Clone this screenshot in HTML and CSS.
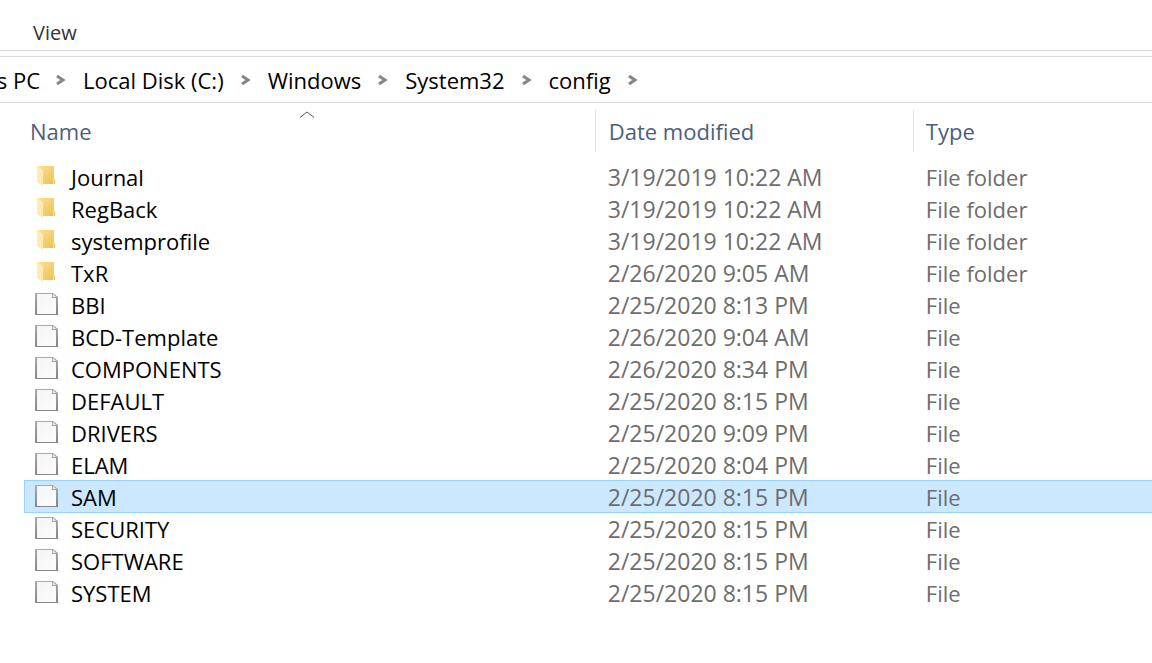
FILE: index.html
```html
<!DOCTYPE html>
<html lang="en">
<head>
  <meta charset="UTF-8">
  <meta name="viewport" content="width=device-width, initial-scale=1.0">
  <title>config</title>
  <link rel="stylesheet" href="styles.css">
</head>

<body>
  <!-- Icons shared by the file rows -->
  <svg class="sprite" aria-hidden="true">
    <defs>
      <linearGradient id="folder-back" x1="0" y1="0" x2="1" y2="1">
        <stop offset="0" stop-color="#ffe08a"/>
        <stop offset="1" stop-color="#eac05c"/>
      </linearGradient>
      <linearGradient id="paper" x1="0" y1="0" x2="1" y2="1">
        <stop offset="0" stop-color="#f3f5f7"/>
        <stop offset="1" stop-color="#fcfcfc"/>
      </linearGradient>
      <linearGradient id="paper-edge" x1="0" y1="0" x2="0" y2="1">
        <stop offset="0" stop-color="#aaaaaa"/>
        <stop offset="1" stop-color="#858585"/>
      </linearGradient>
    </defs>
    <symbol id="folder" viewBox="0 0 24 24">
      <path d="M3 2h16v13l1 1v4H7L3 17z" fill="url(#folder-back)"/>
      <path d="M2 2l5 3q1 1 1 2v15l-5-3q-1-1-1-2z" fill="#ffebb0"/>
      <path d="M18 15h1v5h-1z" fill="#ffdc7c"/>
    </symbol>
    <symbol id="file" viewBox="0 0 24 24">
      <path d="M1 1h17l5 4v18H1z" fill="url(#paper)"/>
      <path d="M0 1h18l5 4v18H0zM2 2v20h19V6h-4V2z" fill="url(#paper-edge)" fill-rule="evenodd"/>
      <path d="M18 2v3h3z" fill="#eeeeee"/>
    </symbol>
    <symbol id="arrow" viewBox="0 0 12 10">
      <path d="M2 1l6 4-6 4" fill="none" stroke="#858585" stroke-width="3"/>
    </symbol>
  </svg>

  <header class="ribbon">
    <button type="button" class="tab">View</button>
  </header>

  <nav class="address" aria-label="Address">
    <a href="#">s PC</a>
    <svg class="arrow"><use href="#arrow"/></svg>
    <a href="#">Local Disk (C:)</a>
    <svg class="arrow"><use href="#arrow"/></svg>
    <a href="#">Windows</a>
    <svg class="arrow"><use href="#arrow"/></svg>
    <a href="#">System32</a>
    <svg class="arrow"><use href="#arrow"/></svg>
    <a href="#">config</a>
    <svg class="arrow"><use href="#arrow"/></svg>
  </nav>

  <main>
    <table class="files">
      <thead>
        <tr>
          <th class="col-name" aria-sort="ascending">
            <button type="button">Name</button>
            <svg class="sort" viewBox="0 0 14 7"><path d="M0 6.500L7 1l7 5.500" fill="none" stroke="#555555"/></svg>
          </th>
          <th class="col-date"><button type="button">Date modified</button></th>
          <th class="col-type"><button type="button">Type</button></th>
        </tr>
      </thead>
      <tbody>
        <tr><td><div class="name"><svg class="icon"><use href="#folder"/></svg>Journal</div></td><td class="date">3/19/2019 10:22 AM</td><td>File folder</td></tr>
        <tr><td><div class="name"><svg class="icon"><use href="#folder"/></svg>RegBack</div></td><td class="date">3/19/2019 10:22 AM</td><td>File folder</td></tr>
        <tr><td><div class="name"><svg class="icon"><use href="#folder"/></svg>systemprofile</div></td><td class="date">3/19/2019 10:22 AM</td><td>File folder</td></tr>
        <tr><td><div class="name"><svg class="icon"><use href="#folder"/></svg>TxR</div></td><td class="date">2/26/2020 9:05 AM</td><td>File folder</td></tr>
        <tr><td><div class="name"><svg class="icon"><use href="#file"/></svg>BBI</div></td><td class="date">2/25/2020 8:13 PM</td><td>File</td></tr>
        <tr><td><div class="name"><svg class="icon"><use href="#file"/></svg>BCD-Template</div></td><td class="date">2/26/2020 9:04 AM</td><td>File</td></tr>
        <tr><td><div class="name"><svg class="icon"><use href="#file"/></svg>COMPONENTS</div></td><td class="date">2/26/2020 8:34 PM</td><td>File</td></tr>
        <tr><td><div class="name"><svg class="icon"><use href="#file"/></svg>DEFAULT</div></td><td class="date">2/25/2020 8:15 PM</td><td>File</td></tr>
        <tr><td><div class="name"><svg class="icon"><use href="#file"/></svg>DRIVERS</div></td><td class="date">2/25/2020 9:09 PM</td><td>File</td></tr>
        <tr><td><div class="name"><svg class="icon"><use href="#file"/></svg>ELAM</div></td><td class="date">2/25/2020 8:04 PM</td><td>File</td></tr>
        <tr class="selected"><td><div class="name"><svg class="icon"><use href="#file"/></svg>SAM</div></td><td class="date">2/25/2020 8:15 PM</td><td>File</td></tr>
        <tr><td><div class="name"><svg class="icon"><use href="#file"/></svg>SECURITY</div></td><td class="date">2/25/2020 8:15 PM</td><td>File</td></tr>
        <tr><td><div class="name"><svg class="icon"><use href="#file"/></svg>SOFTWARE</div></td><td class="date">2/25/2020 8:15 PM</td><td>File</td></tr>
        <tr><td><div class="name"><svg class="icon"><use href="#file"/></svg>SYSTEM</div></td><td class="date">2/25/2020 8:15 PM</td><td>File</td></tr>
      </tbody>
    </table>
  </main>
</body>
</html>
```
FILE: styles.css
```css
* {
  box-sizing: border-box;
}

body {
  margin: 0;
  background-color: #ffffff;
  color: #000000;
  font-family: "Open Sans", "Noto Sans", sans-serif;
  font-size: 22px;
  line-height: 32px;
  overflow-x: hidden;
}

button {
  padding: 0;
  border: none;
  background: none;
  font: inherit;
  color: inherit;
}

.sprite {
  position: absolute;
  width: 0;
  height: 0;
}

/* Ribbon */
.ribbon {
  padding: 17px 33px 1px;
  border-bottom: 1px solid #d9d9d9;
}

.tab {
  display: block;
  color: #333333;
  font-size: 20px;
}

/* Address bar */
.address {
  display: flex;
  align-items: center;
  gap: 16px;
  height: 47px;
  margin-top: 5px;
  border-top: 1px solid #d9d9d9;
  border-bottom: 1px solid #d9d9d9;
  white-space: nowrap;
}

.address a {
  color: #000000;
  text-decoration: none;
}

/* the first crumb runs out of the window on the left */
.address a:first-child {
  display: flex;
  justify-content: flex-end;
  width: 40px;
  margin-right: -1px;
}

.arrow {
  flex: none;
  width: 12px;
  height: 10px;
}

/* File list */
.files {
  width: calc(100% - 24px);
  margin: 7px 0 0 24px;
  table-layout: fixed;
  border-collapse: separate;
  border-spacing: 0;
}

.files th {
  position: relative;
  height: 42px;
  padding: 0 0 0 13px;
  border-left: 1px solid #e2e2e2;
  color: #4c607a;
  font-weight: normal;
  text-align: left;
}

.files .col-name {
  width: 50.6%;
  padding-left: 5px;
  border-left-color: transparent;
}

.files .col-date {
  width: 28.2%;
}

.files .col-type {
  padding-left: 12px;
}

.files th button {
  display: block;
}

.sort {
  position: absolute;
  top: 1px;
  left: 50%;
  width: 14px;
  height: 7px;
  margin-left: -10px;
}

.files tbody::before {
  content: "";
  display: block;
  height: 9px;
}

.files td {
  height: 32px;
  padding: 0 0 0 13px;
  color: #6d6d6d;
  white-space: nowrap;
}

.files td:first-child {
  padding-left: 11px;
  color: #000000;
}

.files .date {
  font-size: 23px;
}

.name {
  display: flex;
  align-items: center;
  gap: 12px;
}

.icon {
  flex: none;
  width: 24px;
  height: 24px;
  margin-bottom: 2px;
}

.selected td {
  background-color: #cce8ff;
  box-shadow: 0 -1px #99d1ff, inset 0 -1px #99d1ff;
}

.selected td:first-child {
  box-shadow: 0 -1px #99d1ff, inset 0 -1px #99d1ff, inset 1px 0 #99d1ff;
}
```
